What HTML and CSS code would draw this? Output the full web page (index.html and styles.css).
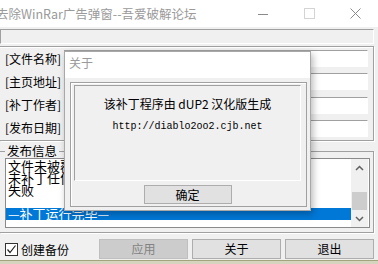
FILE: index.html
```html
<!DOCTYPE html>
<html>
<head>
<meta charset="utf-8">
<link rel="stylesheet" href="styles.css">
</head>
<body>
<div class="win">
  <div class="titlebar">
    <span class="title">去除WinRar广告弹窗--吾爱破解论坛</span>
    <div class="ctrls">
      <div class="ctrl"><svg width="10" height="10" viewBox="0 0 10 10"><rect x="0" y="5" width="10" height="1" fill="#8a8a8a"/></svg></div>
      <div class="ctrl"><svg width="11" height="11" viewBox="0 0 11 11"><rect x="0.5" y="0.5" width="10" height="10" fill="none" stroke="#d4d4d4"/></svg></div>
      <div class="ctrl"><svg width="11" height="11" viewBox="0 0 11 11"><path d="M0.5 0.5L10.5 10.5M10.5 0.5L0.5 10.5" stroke="#8a8a8a" stroke-width="1"/></svg></div>
    </div>
  </div>
  <div class="main">
    <div class="statusbox"></div>
    <div class="group1">
      <div class="row"><span class="lbl">[文件名称]</span><div class="field"></div></div>
      <div class="row"><span class="lbl">[主页地址]</span><div class="field"></div></div>
      <div class="row"><span class="lbl">[补丁作者]</span><div class="field"></div></div>
      <div class="row"><span class="lbl">[发布日期]</span><div class="field"></div></div>
    </div>
    <fieldset class="group2">
      <legend>发布信息</legend>
      <div class="listbox">
        <div class="items">
          <div class="item">文件未被覆盖</div>
          <div class="item">未补丁任何文件</div>
          <div class="item">失败</div>
          <div class="item"></div>
          <div class="item sel">—补丁运行完毕—</div>
        </div>
        <div class="scrollbar">
          <div class="sarrow"><svg width="9" height="6" viewBox="0 0 9 6"><path d="M1 5L4.5 1.5L8 5" fill="none" stroke="#606060" stroke-width="1.5"/></svg></div>
          <div class="strack"><div class="thumb"></div></div>
          <div class="sarrow"><svg width="9" height="6" viewBox="0 0 9 6"><path d="M1 1L4.5 4.5L8 1" fill="none" stroke="#606060" stroke-width="1.5"/></svg></div>
        </div>
      </div>
    </fieldset>
    <div class="bottom">
      <div class="check">
        <span class="box"><svg width="11" height="11" viewBox="0 0 11 11"><path d="M1.5 5.5L4 8.5L9.5 1.5" fill="none" stroke="#222" stroke-width="1.2"/></svg></span>
        <span>创建备份</span>
      </div>
      <div class="btns">
        <div class="btn disabled">应用</div>
        <div class="btn">关于</div>
        <div class="btn">退出</div>
      </div>
    </div>
  </div>
  <div class="desk"></div>
</div>

<div class="dlg">
  <div class="dlg-title">关于</div>
  <div class="dlg-body">
    <div class="frame">
      <div class="inner">
        <div class="line1">该补丁程序由 dUP2 汉化版生成</div>
        <div class="line2">http://diablo2oo2.cjb.net</div>
      </div>
      <div class="okrow"><div class="btn ok">确定</div></div>
    </div>
  </div>
</div>
</body>
</html>
```
FILE: styles.css
```css
* { box-sizing: border-box; }
html, body { margin: 0; padding: 0; }
body {
  width: 378px;
  height: 264px;
  overflow: hidden;
  background: #f0f0f0;
  font-family: "Noto Sans CJK SC", sans-serif;
  font-size: 12px;
  color: #000;
  position: relative;
}
.win { width: 378px; height: 264px; display: flex; flex-direction: column; }
.titlebar { height: 27px; background: #fff; display: flex; align-items: center; }
.title { flex: 1; color: #9a9a9a; font-size: 12.5px; margin-left: -4px; white-space: nowrap; line-height: 27px; overflow: hidden; }
.ctrls { display: flex; height: 27px; }
.ctrl { width: 46px; height: 27px; display: flex; align-items: center; justify-content: center; }

.main { padding: 2px 4px 0 0; display: flex; flex-direction: column; }
.statusbox { height: 15px; border: 1px solid; border-color: #a0a0a0 #fff #fff #a0a0a0; }

.group1 {
  margin-top: 2px;
  height: 95px;
  border: 1px solid #a0a0a0;
  border-left: none;
  box-shadow: inset 0 1px 0 #fff, 1px 1px 0 #fff;
  display: flex;
  flex-direction: column;
}
.row { height: 24px; display: flex; align-items: center; }
.lbl { width: 64px; padding-left: 5px; white-space: nowrap; line-height: 14px; }
.field {
  flex: 1;
  height: 17px;
  margin-right: 5px;
  background: #fff;
  border: 1px solid;
  border-color: #a0a0a0 #fff #fff #a0a0a0;
}

.group2 {
  margin: 3px 0 0 0;
  padding: 0 3px 4px 5px;
  border: 1px solid #a0a0a0;
  border-left: none;
  box-shadow: 1px 1px 0 #fff;
  min-width: 0;
}
.group2 legend { font-size: 12.5px; line-height: 14px; padding: 0 2px; }
.listbox {
  height: 70px;
  border: 1px solid #8a8a8a;
  background: #fff;
  display: flex;
}
.items { flex: 1; padding-top: 1px; overflow: hidden; }
.item { height: 12px; line-height: 12px; font-size: 13px; white-space: nowrap; padding-left: 2px; }
.item.sel { background: #0078d7; color: #fff; }
.scrollbar { width: 17px; background: #f0f0f0; display: flex; flex-direction: column; margin-right: 1px; }
.sarrow { height: 17px; display: flex; align-items: center; justify-content: center; }
.strack { flex: 1; display: flex; flex-direction: column; justify-content: flex-end; }
.thumb { height: 18px; margin: 0 1px; background: #cdcdcd; }

.bottom { margin-top: 6px; height: 20px; display: flex; align-items: center; }
.check { width: 99px; display: flex; align-items: center; padding-left: 5px; gap: 3px; }
.box { width: 13px; height: 13px; border: 1px solid #333; background: #fff; display: flex; align-items: center; justify-content: center; }
.btns { display: flex; gap: 4px; }
.btn {
  width: 89px;
  height: 20px;
  background: #e1e1e1;
  border: 1px solid #adadad;
  display: flex;
  align-items: center;
  justify-content: center;
  line-height: 14px;
}
.btn.disabled { background: #cccccc; border-color: #bfbfbf; color: #838383; }
.desk { margin-top: 1px; height: 4px; background: #d6d3be; border-top: 1px solid #a4a47c; }

.dlg {
  position: absolute;
  left: 64px;
  top: 51px;
  width: 247px;
  height: 160px;
  border: 1px solid #a8a8a8;
  background: #f0f0f0;
  box-shadow: 2px 3px 7px rgba(0, 0, 0, 0.28);
  display: flex;
  flex-direction: column;
}
.dlg-title { height: 26px; background: #fff; color: #9a9a9a; padding-left: 4px; line-height: 22px; }
.dlg-body { flex: 1; padding: 4px 3px 3px 5px; display: flex; }
.frame {
  flex: 1;
  border: 1px solid #a0a0a0;
  box-shadow: inset 1px 1px 0 #fff;
  padding: 2px 5px 2px 3px;
  display: flex;
  flex-direction: column;
}
.inner {
  height: 96px;
  border: 1px solid;
  border-color: #a0a0a0 #fff #fff #a0a0a0;
  display: flex;
  flex-direction: column;
  align-items: center;
}
.line1 { margin-top: 9px; line-height: 18px; }
.line2 { margin-top: 6px; font-family: "Liberation Mono", monospace; font-size: 10px; line-height: 16px; }
.okrow { margin-top: 4px; display: flex; justify-content: center; }
.btn.ok { width: 88px; height: 19px; }
```
